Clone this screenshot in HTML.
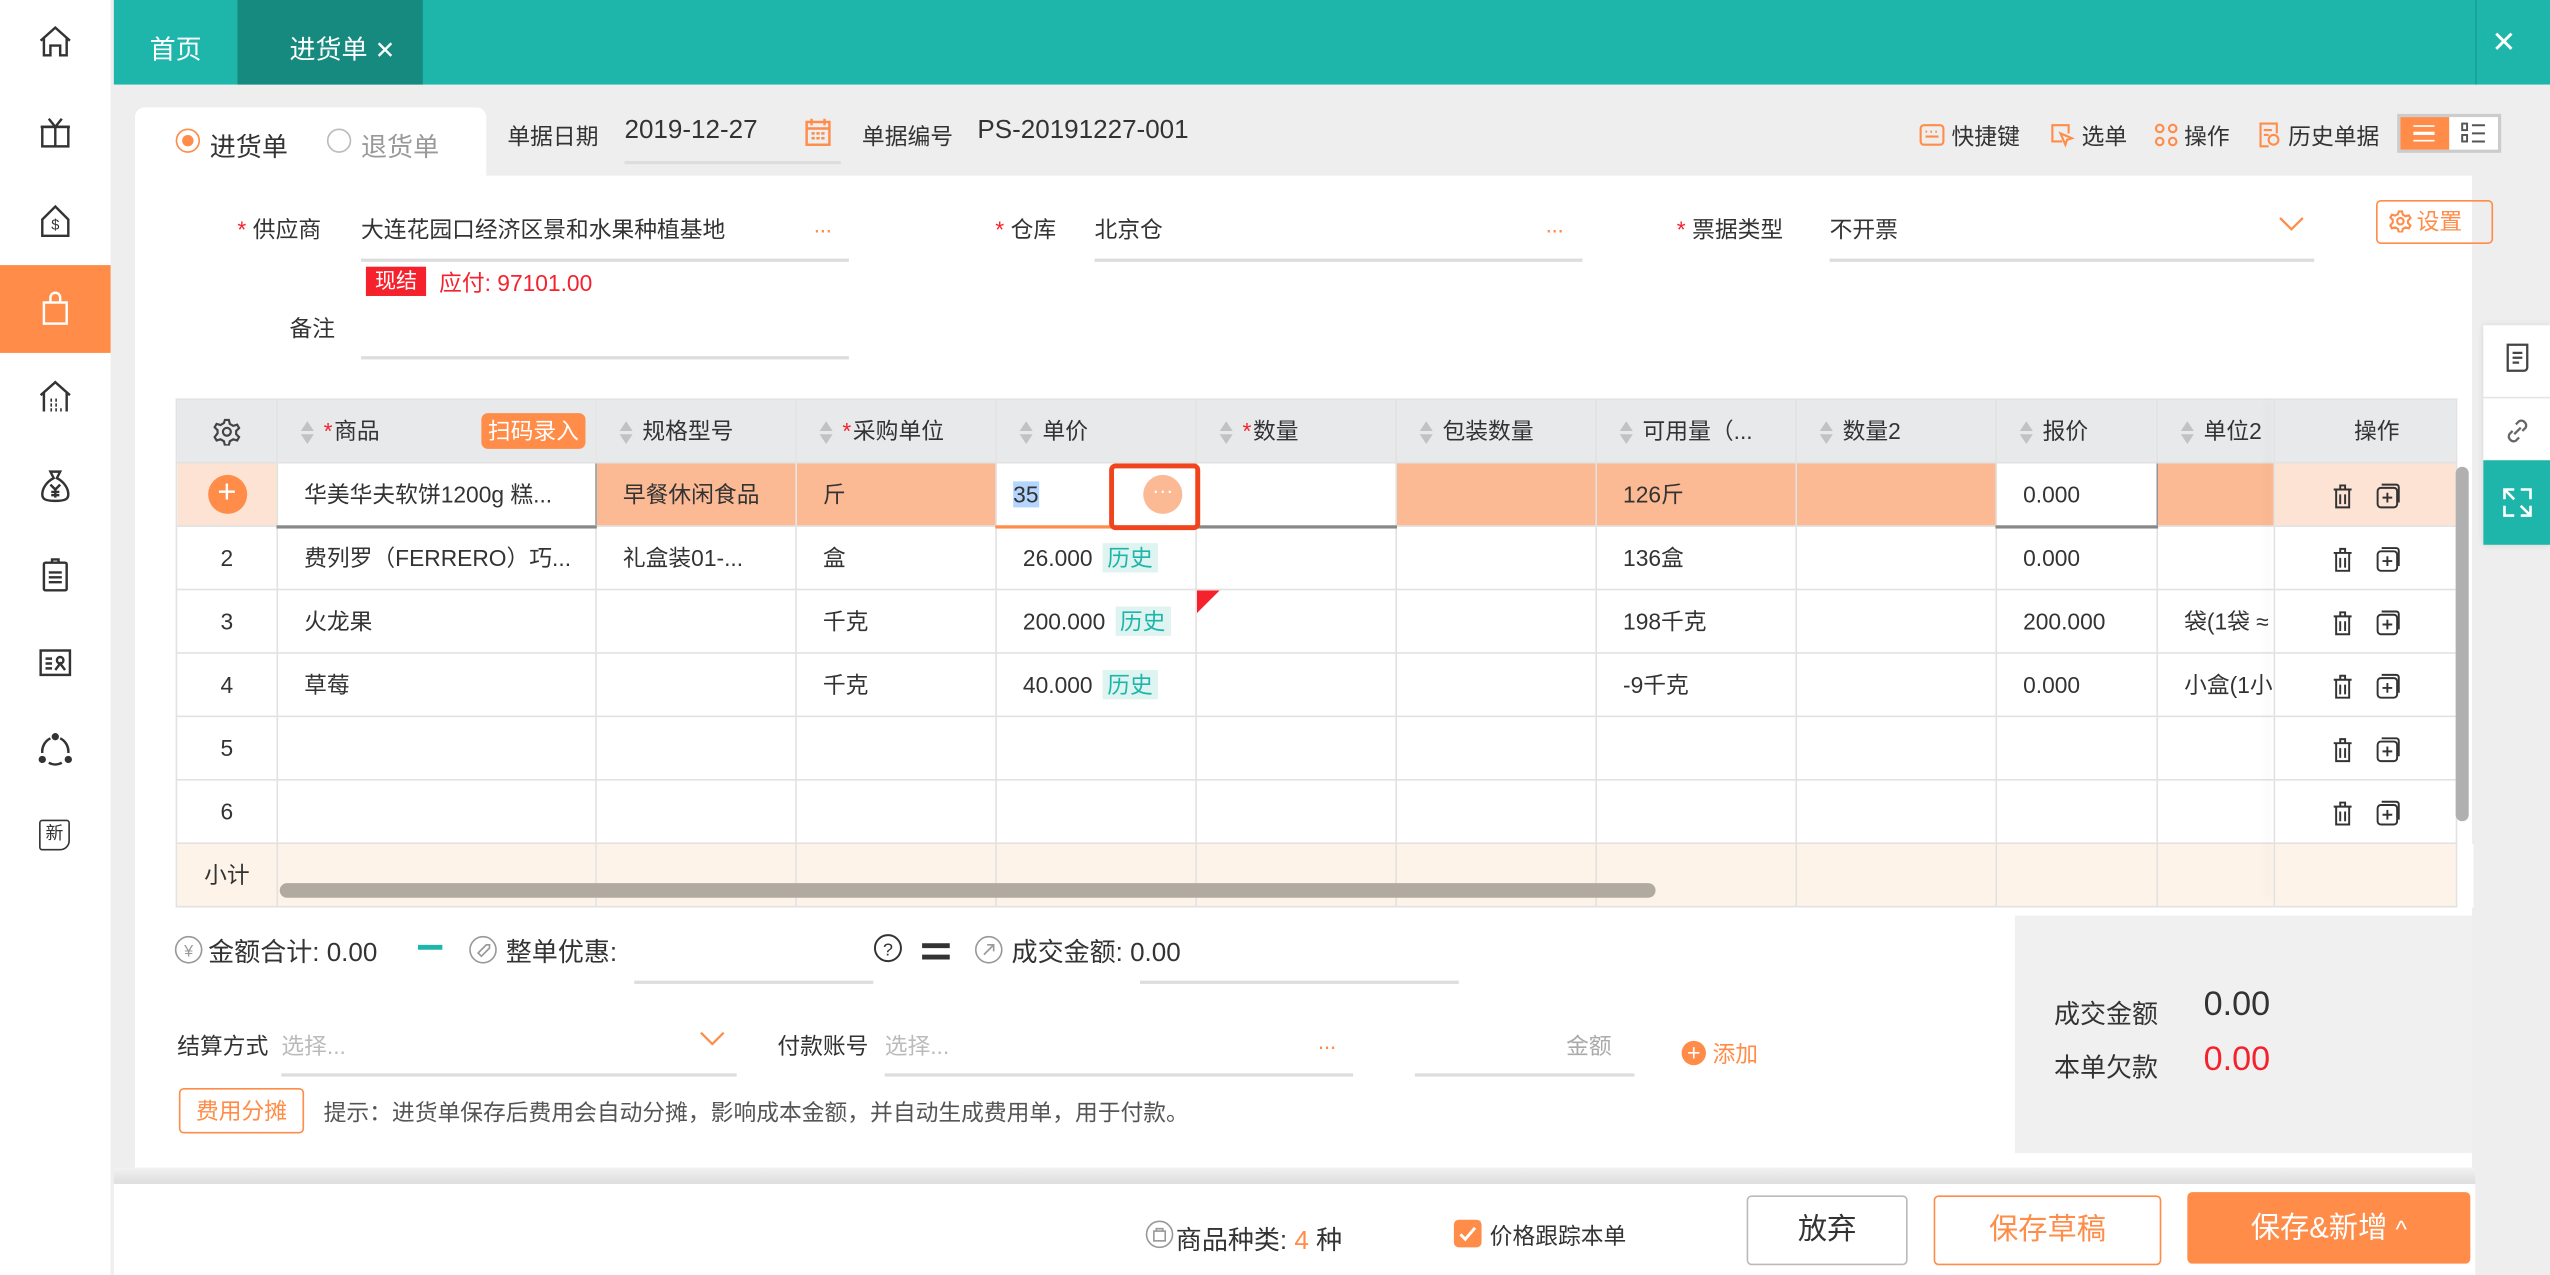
<!DOCTYPE html>
<html><head><meta charset="utf-8"><style>
*{margin:0;padding:0;box-sizing:border-box}
html,body{width:2550px;height:1274px;overflow:hidden;background:#eee}
#w{position:absolute;left:0;top:0;width:1568px;height:784px;transform:scale(1.62628);transform-origin:0 0;font-family:"Liberation Sans","Noto Sans CJK SC",sans-serif;font-size:14px;color:#333;background:#eee}
.a{position:absolute;white-space:nowrap}
.ul{position:absolute;height:1px;background:#ddd}
.st{color:#f5222d;margin-right:4px}
svg{display:block}
table{border-collapse:collapse;table-layout:fixed;position:absolute;left:108px;top:245px;width:1412px}
td{border:1px solid #e2e2e2;height:39px;padding:0 0 0 16px;white-space:nowrap;overflow:hidden;font-size:14px}
tr.h td{background:#e8e9eb;padding-left:14px}
.so{display:inline-block;vertical-align:middle;margin-right:6px;width:8px}
.so i{display:block;width:0;height:0;border-left:4px solid transparent;border-right:4px solid transparent}
.so i.u{border-bottom:6px solid #c2c2c2;margin-bottom:2px}.so i.d{border-top:6px solid #c2c2c2}
.hs{background:#fde3d3}.ho{background:#fbb994}
.ls{color:#1eb6aa;background:#dff4f1;padding:1px 3px;margin-left:6px}
.ops{text-align:center;padding:0}
</style></head><body><div id="w">
<!-- sidebar -->
<div class="a" style="left:0;top:0;width:68px;height:784px;background:#fff"></div>
<div class="a" style="left:0;top:163px;width:68px;height:54px;background:#ff8c48"></div>
<svg class="a" style="left:22px;top:14px" width="24" height="24" viewBox="0 0 24 24" fill="none" stroke="#333" stroke-width="1.5"><path d="M3 11L12 3l9 8M5 9v11h4v-6h6v6h4V9"/></svg>
<svg class="a" style="left:22px;top:69px" width="24" height="24" viewBox="0 0 24 24" fill="none" stroke="#333" stroke-width="1.5"><rect x="4" y="9" width="16" height="12"/><path d="M3 9h18M12 9v12M8 4l4 5 4-5"/></svg>
<svg class="a" style="left:22px;top:124px" width="24" height="24" viewBox="0 0 24 24" fill="none" stroke="#333" stroke-width="1.5"><path d="M12 3l8 8v10H4V11z"/><text x="12" y="17" font-size="9" text-anchor="middle" fill="#333" stroke="none">$</text></svg>
<svg class="a" style="left:22px;top:178px" width="24" height="24" viewBox="0 0 24 24" fill="none" stroke="#fff" stroke-width="1.5"><rect x="5" y="8" width="14" height="13"/><path d="M9 8V5a3 3 0 0 1 6 0v3"/></svg>
<svg class="a" style="left:22px;top:232px" width="24" height="24" viewBox="0 0 24 24" fill="none" stroke="#333" stroke-width="1.5"><path d="M3 11L12 3l9 8M5 9v12M19 9v12"/><path d="M9 14h1M12 14h1M9 17h1M12 17h1M15 20h1M9 20h1M12 20h1" stroke-width="2"/></svg>
<svg class="a" style="left:22px;top:287px" width="24" height="24" viewBox="0 0 24 24" fill="none" stroke="#333" stroke-width="1.5"><path d="M9 3h6l-2 4c4 2 7 6 7 10 0 3-2 4-8 4s-8-1-8-4c0-4 3-8 7-10z"/><path d="M9 11l3 3 3-3M12 14v5M9.5 15.5h5M9.5 17.5h5"/></svg>
<svg class="a" style="left:22px;top:341px" width="24" height="24" viewBox="0 0 24 24" fill="none" stroke="#333" stroke-width="1.5"><rect x="5" y="5" width="14" height="17" rx="1"/><path d="M10 5V3h4v2M8 11h8M8 14h8M8 17h8"/></svg>
<svg class="a" style="left:22px;top:395px" width="24" height="24" viewBox="0 0 24 24" fill="none" stroke="#333" stroke-width="1.5"><rect x="3" y="5" width="18" height="15"/><path d="M6 10h4M6 13h4M6 16h4"/><circle cx="15" cy="11" r="2"/><path d="M12 17l3-4 3 4"/></svg>
<svg class="a" style="left:22px;top:449px" width="24" height="24" viewBox="0 0 24 24" fill="none" stroke="#333" stroke-width="1.5"><circle cx="12" cy="4" r="1.5" fill="#333"/><circle cx="4" cy="18" r="1.5" fill="#333"/><circle cx="20" cy="18" r="1.5" fill="#333"/><path d="M9 5a9 9 0 0 0-5 9M15 5a9 9 0 0 1 5 9M8 20a8 8 0 0 0 8 0"/></svg>
<div class="a" style="left:24px;top:504px;width:19px;height:19px;border:1.5px solid #333;border-radius:2px 2px 6px 2px;font-size:11px;line-height:16px;text-align:center">新</div>
<!-- top bar -->
<div class="a" style="left:70px;top:0;width:1498px;height:52px;background:#1eb6aa"></div>
<div class="a" style="left:146px;top:0;width:114px;height:52px;background:#178a80"></div>
<div class="a" style="left:92px;top:17px;font-size:16px;color:#fff">首页</div>
<div class="a" style="left:178px;top:17px;font-size:16px;color:#fff">进货单 <span style="font-size:15px">✕</span></div>
<div class="a" style="left:1522px;top:0;width:1px;height:52px;background:#17a095"></div>
<div class="a" style="left:1532px;top:16px;font-size:18px;color:#fff">✕</div>
<!-- header tabs -->
<div class="a" style="left:83px;top:66px;width:216px;height:44px;background:#fff;border-radius:6px 6px 0 0"></div>
<div class="a" style="left:108px;top:79px;width:15px;height:15px;border:1.5px solid #ff8c48;border-radius:50%"><div style="margin:2.5px;width:7px;height:7px;background:#ff8c48;border-radius:50%"></div></div>
<div class="a" style="left:129px;top:77px;font-size:16px">进货单</div>
<div class="a" style="left:201px;top:79px;width:15px;height:15px;border:1px solid #bbb;border-radius:50%"></div>
<div class="a" style="left:222px;top:77px;font-size:16px;color:#999">退货单</div>
<div class="a" style="left:312px;top:74px">单据日期</div>
<div class="a" style="left:384px;top:72px;font-size:16px">2019-12-27</div>
<svg class="a" style="left:495px;top:72px" width="16" height="18" viewBox="0 0 16 18" fill="none" stroke="#ff8c48" stroke-width="1.5"><rect x="1" y="3" width="14" height="14"/><path d="M1 7h14M4 1v4M12 1v4M4 10h2M7 10h2M10 10h2M4 13h2M7 13h2M10 13h2"/></svg>
<div class="ul" style="left:384px;top:99px;width:133px;height:2px"></div>
<div class="a" style="left:530px;top:74px">单据编号</div>
<div class="a" style="left:601px;top:72px;font-size:16px">PS-20191227-001</div>
<!-- toolbar -->
<svg class="a" style="left:1180px;top:75px" width="16" height="16" viewBox="0 0 16 16" fill="none" stroke="#ff8c48" stroke-width="1.3"><rect x="1" y="2" width="14" height="12" rx="2"/><path d="M4 6h1M7 6h1M10 6h1M4 9h8"/></svg>
<div class="a" style="left:1200px;top:74px">快捷键</div>
<svg class="a" style="left:1260px;top:75px" width="16" height="16" viewBox="0 0 16 16" fill="none" stroke="#ff8c48" stroke-width="1.3"><path d="M8 12H2V2h10v5"/><path d="M7 7l7 3-3 1-1 3z"/></svg>
<div class="a" style="left:1280px;top:74px">选单</div>
<svg class="a" style="left:1324px;top:75px" width="16" height="16" viewBox="0 0 16 16" fill="none" stroke="#ff8c48" stroke-width="1.3"><circle cx="4" cy="4" r="2.3"/><circle cx="12" cy="4" r="2.3"/><circle cx="4" cy="12" r="2.3"/><circle cx="12" cy="12" r="2.3"/></svg>
<div class="a" style="left:1343px;top:74px">操作</div>
<svg class="a" style="left:1388px;top:75px" width="16" height="16" viewBox="0 0 16 16" fill="none" stroke="#ff8c48" stroke-width="1.3"><path d="M7 15H2V1h10v6M4 5h5M4 8h3"/><circle cx="10" cy="11" r="3"/></svg>
<div class="a" style="left:1407px;top:74px">历史单据</div>
<div class="a" style="left:1474px;top:70px;width:64px;height:24px;border:2px solid #ccc;background:#fff"></div>
<div class="a" style="left:1476px;top:72px;width:30px;height:20px;background:#ff8c48"></div>
<div class="a" style="left:1484px;top:77px;width:13px;height:10px;border-top:1.5px solid #fff;border-bottom:1.5px solid #fff"><div style="margin-top:3px;height:1.5px;background:#fff"></div></div>
<svg class="a" style="left:1513px;top:75px" width="16" height="14" viewBox="0 0 16 14" fill="none" stroke="#555" stroke-width="1.2"><rect x="1" y="1" width="3" height="4"/><rect x="1" y="8" width="3" height="4"/><path d="M7 2h8M7 7h8M7 12h8"/></svg>
<!-- main panel -->
<div class="a" style="left:83px;top:108px;width:1437px;height:610px;background:#fff"></div>
<div class="a" style="left:146px;top:131px"><span class="st">*</span>供应商</div>
<div class="a" style="left:222px;top:131px">大连花园口经济区景和水果种植基地</div>
<div class="a" style="left:500px;top:133px;color:#ff8c48;font-size:14px;letter-spacing:-1px">···</div>
<div class="ul" style="left:222px;top:159px;width:300px;height:2px"></div>
<div class="a" style="left:225px;top:164px;width:37px;height:18px;background:#f5222d;color:#fff;font-size:13px;text-align:center;line-height:18px">现结</div>
<div class="a" style="left:270px;top:164px;color:#f5222d">应付: 97101.00</div>
<div class="a" style="left:178px;top:192px">备注</div>
<div class="ul" style="left:222px;top:219px;width:300px;height:2px"></div>
<div class="a" style="left:612px;top:131px"><span class="st">*</span>仓库</div>
<div class="a" style="left:673px;top:131px">北京仓</div>
<div class="a" style="left:950px;top:133px;color:#ff8c48;letter-spacing:-1px">···</div>
<div class="ul" style="left:673px;top:159px;width:300px;height:2px"></div>
<div class="a" style="left:1031px;top:131px"><span class="st">*</span>票据类型</div>
<div class="a" style="left:1125px;top:131px">不开票</div>
<svg class="a" style="left:1401px;top:133px" width="16" height="10" viewBox="0 0 16 10" fill="none" stroke="#ff8c48" stroke-width="1.4"><path d="M1 1l7 7 7-7"/></svg>
<div class="ul" style="left:1125px;top:159px;width:298px;height:2px"></div>
<div class="a" style="left:1461px;top:123px;width:72px;height:27px;border:1px solid #ff8c48;border-radius:3px;color:#ff8c48;line-height:25px;padding-left:24px">设置</div>
<svg class="a" style="left:1469px;top:129px" width="14" height="14" viewBox="0 0 14 14" fill="none" stroke="#ff8c48" stroke-width="1.3"><circle cx="7" cy="7" r="2"/><path d="M6 1h2l.5 2 1.7 1 2-.6 1 1.7-1.5 1.5v1.6l1.5 1.5-1 1.7-2-.6-1.7 1-.5 2H6l-.5-2-1.7-1-2 .6-1-1.7L2.3 7.8V6.2L.8 4.7l1-1.7 2 .6 1.7-1z"/></svg>
<!-- table -->
<table>
<colgroup><col style="width:62px"><col style="width:196px"><col style="width:123px"><col style="width:123px"><col style="width:123px"><col style="width:123px"><col style="width:123px"><col style="width:123px"><col style="width:123px"><col style="width:99px"><col style="width:72px"><col style="width:112px"><col style="width:10px"></colgroup>
<tr class="h"><td style="padding:0;text-align:center"><svg style="display:inline-block;vertical-align:middle" width="17" height="17" viewBox="0 0 14 14" fill="none" stroke="#444" stroke-width="1.1"><circle cx="7" cy="7" r="2"/><path d="M6 1h2l.5 2 1.7 1 2-.6 1 1.7-1.5 1.5v1.6l1.5 1.5-1 1.7-2-.6-1.7 1-.5 2H6l-.5-2-1.7-1-2 .6-1-1.7L2.3 7.8V6.2L.8 4.7l1-1.7 2 .6 1.7-1z"/></svg></td>
<td><span class="so"><i class="u"></i><i class="d"></i></span><span class="st" style="margin-right:1px">*</span>商品<span style="float:right;margin-right:6px;background:#ff8c48;color:#fff;border-radius:4px;padding:1px 4px;margin-top:-1px">扫码录入</span></td>
<td><span class="so"><i class="u"></i><i class="d"></i></span>规格型号</td>
<td><span class="so"><i class="u"></i><i class="d"></i></span><span class="st" style="margin-right:1px">*</span>采购单位</td>
<td><span class="so"><i class="u"></i><i class="d"></i></span>单价</td>
<td><span class="so"><i class="u"></i><i class="d"></i></span><span class="st" style="margin-right:1px">*</span>数量</td>
<td><span class="so"><i class="u"></i><i class="d"></i></span>包装数量</td>
<td><span class="so"><i class="u"></i><i class="d"></i></span>可用量（...</td>
<td><span class="so"><i class="u"></i><i class="d"></i></span>数量2</td>
<td><span class="so"><i class="u"></i><i class="d"></i></span>报价</td>
<td><span class="so"><i class="u"></i><i class="d"></i></span>单位2</td>
<td class="ops">操作</td><td style="padding:0;background:#fff;border:none"></td></tr>
<tr><td class="hs" style="padding:0;text-align:center"><span style="display:inline-block;width:24px;height:24px;border-radius:50%;background:#ff8c48;color:#fff;font-size:20px;line-height:23px">+</span></td>
<td style="background:#fff;border:1px solid #999;border-bottom:2px solid #888">华美华夫软饼1200g 糕...</td>
<td class="ho">早餐休闲食品</td><td class="ho">斤</td>
<td style="background:#fff;border:1px solid #ff8c48;border-bottom:2px solid #ff8c48;padding-left:10px"><span style="background:#b4d5fe">35</span></td>
<td style="background:#fff;border-bottom:2px solid #888"></td>
<td class="ho"></td><td class="ho">126斤</td><td class="ho"></td>
<td style="background:#fff;border:1px solid #999;border-bottom:2px solid #888">0.000</td>
<td class="ho"></td>
<td class="hs ops">_ICONS_</td><td style="border:none;background:#fff"></td></tr>
<tr><td style="padding:0;text-align:center">2</td><td>费列罗（FERRERO）巧...</td><td>礼盒装01-...</td><td>盒</td><td>26.000<span class="ls">历史</span></td><td></td><td></td><td>136盒</td><td></td><td>0.000</td><td></td><td class="ops">_ICONS_</td><td style="border:none"></td></tr>
<tr><td style="padding:0;text-align:center">3</td><td>火龙果</td><td></td><td>千克</td><td>200.000<span class="ls">历史</span></td><td style="position:relative"><div style="position:absolute;left:0;top:0;width:0;height:0;border-top:14px solid #f5222d;border-right:14px solid transparent"></div></td><td></td><td>198千克</td><td></td><td>200.000</td><td>袋(1袋 ≈</td><td class="ops">_ICONS_</td><td style="border:none"></td></tr>
<tr><td style="padding:0;text-align:center">4</td><td>草莓</td><td></td><td>千克</td><td>40.000<span class="ls">历史</span></td><td></td><td></td><td>-9千克</td><td></td><td>0.000</td><td>小盒(1小</td><td class="ops">_ICONS_</td><td style="border:none"></td></tr>
<tr><td style="padding:0;text-align:center">5</td><td></td><td></td><td></td><td></td><td></td><td></td><td></td><td></td><td></td><td></td><td class="ops">_ICONS_</td><td style="border:none"></td></tr>
<tr><td style="padding:0;text-align:center;height:35px">6</td><td></td><td></td><td></td><td></td><td></td><td></td><td></td><td></td><td></td><td></td><td class="ops">_ICONS_</td><td style="border:none"></td></tr>
<tr style="background:#fdf3e8"><td style="padding:0;text-align:center;height:38px">小计</td><td></td><td></td><td></td><td></td><td></td><td></td><td></td><td></td><td></td><td></td><td></td><td style="border:none;background:#fff"></td></tr>
</table>
<div class="a" style="left:1397px;top:245px;width:1px;height:308px;box-shadow:-3px 0 5px rgba(0,0,0,.08)"></div>
<!-- red box -->
<div class="a" style="left:682px;top:285px;width:56px;height:41px;border:3px solid #f0441f;border-radius:4px"></div>
<div class="a" style="left:703px;top:292px;width:24px;height:24px;border-radius:50%;background:#fbb994;color:#fff;text-align:center;line-height:20px;font-size:13px">···</div>
<!-- scrollbars -->
<div class="a" style="left:172px;top:543px;width:846px;height:9px;border-radius:5px;background:#b1aaa0"></div>
<div class="a" style="left:1510px;top:287px;width:8px;height:218px;border-radius:4px;background:#b0b0b0"></div>
<!-- right float -->
<div class="a" style="left:1527px;top:200px;width:41px;height:135px;background:#fff;box-shadow:0 0 4px rgba(0,0,0,.1)"></div>
<svg class="a" style="left:1538px;top:210px" width="20" height="20" viewBox="0 0 20 20" fill="none" stroke="#444" stroke-width="1.4"><path d="M4 2h12v14a2 2 0 0 1-2 2H4z"/><path d="M7 7h6M7 10h6M7 13h4"/></svg>
<div class="a" style="left:1527px;top:244px;width:41px;height:1px;background:#e5e5e5"></div>
<svg class="a" style="left:1538px;top:255px" width="20" height="20" viewBox="0 0 20 20" fill="none" stroke="#666" stroke-width="1.4"><path d="M8 12l4-4M9 6l2-2a3 3 0 0 1 4 4l-2 2M11 14l-2 2a3 3 0 0 1-4-4l2-2"/></svg>
<div class="a" style="left:1527px;top:283px;width:41px;height:52px;background:#1eb6aa"></div>
<svg class="a" style="left:1538px;top:299px" width="20" height="20" viewBox="0 0 20 20" fill="none" stroke="#fff" stroke-width="1.6"><path d="M2 8V2h6M18 12v6h-6M2 2l6 6M18 18l-6-6M12 2h6v6M8 18H2v-6"/></svg>
<!-- summary -->
<svg class="a" style="left:107px;top:575px" width="18" height="18" viewBox="0 0 18 18" fill="none" stroke="#999" stroke-width="1"><circle cx="9" cy="9" r="8"/><text x="9" y="13" font-size="10" text-anchor="middle" fill="#999" stroke="none">¥</text></svg>
<div class="a" style="left:128px;top:572px;font-size:16px">金额合计: 0.00</div>
<div class="a" style="left:257px;top:581px;width:15px;height:3px;background:#1eb6aa"></div>
<svg class="a" style="left:288px;top:575px" width="18" height="18" viewBox="0 0 18 18" fill="none" stroke="#999" stroke-width="1"><circle cx="9" cy="9" r="8"/><path d="M6 11l5-5h2v2l-5 5z"/></svg>
<div class="a" style="left:311px;top:572px;font-size:16px">整单优惠:</div>
<div class="ul" style="left:390px;top:603px;width:147px;height:2px"></div>
<svg class="a" style="left:537px;top:574px" width="18" height="18" viewBox="0 0 18 18" fill="none" stroke="#333" stroke-width="1.2"><circle cx="9" cy="9" r="8"/><text x="9" y="13.5" font-size="11" text-anchor="middle" fill="#333" stroke="none">?</text></svg>
<div class="a" style="left:567px;top:580px;width:17px;height:3px;background:#333"></div>
<div class="a" style="left:567px;top:587px;width:17px;height:3px;background:#333"></div>
<svg class="a" style="left:599px;top:575px" width="18" height="18" viewBox="0 0 18 18" fill="none" stroke="#999" stroke-width="1"><circle cx="9" cy="9" r="8"/><path d="M6 12l6-6M8 6h4v4"/></svg>
<div class="a" style="left:622px;top:572px;font-size:16px">成交金额: 0.00</div>
<div class="ul" style="left:701px;top:603px;width:196px;height:2px"></div>
<div class="a" style="left:109px;top:633px">结算方式</div>
<div class="a" style="left:173px;top:633px;color:#bbb">选择...</div>
<svg class="a" style="left:430px;top:634px" width="16" height="10" viewBox="0 0 16 10" fill="none" stroke="#ff8c48" stroke-width="1.4"><path d="M1 1l7 7 7-7"/></svg>
<div class="ul" style="left:173px;top:660px;width:280px;height:2px"></div>
<div class="a" style="left:478px;top:633px">付款账号</div>
<div class="a" style="left:544px;top:633px;color:#bbb">选择...</div>
<div class="a" style="left:810px;top:635px;color:#ff8c48;letter-spacing:-1px">···</div>
<div class="ul" style="left:544px;top:660px;width:288px;height:2px"></div>
<div class="a" style="left:963px;top:633px;color:#aaa">金额</div>
<div class="ul" style="left:870px;top:660px;width:135px;height:2px"></div>
<div class="a" style="left:1034px;top:640px;width:15px;height:15px;border-radius:50%;background:#ff8c48;color:#fff;font-size:14px;line-height:14px;text-align:center">+</div>
<div class="a" style="left:1053px;top:638px;color:#ff8c48">添加</div>
<div class="a" style="left:110px;top:669px;width:77px;height:28px;border:1px solid #ff8c48;border-radius:3px;color:#ff8c48;line-height:26px;text-align:center">费用分摊</div>
<div class="a" style="left:199px;top:674px;color:#555">提示：进货单保存后费用会自动分摊，影响成本金额，并自动生成费用单，用于付款。</div>
<div class="a" style="left:1239px;top:563px;width:281px;height:146px;background:#f0f0f0"></div>
<div class="a" style="left:1263px;top:610px;font-size:16px">成交金额</div>
<div class="a" style="left:1355px;top:606px;font-size:21px">0.00</div>
<div class="a" style="left:1263px;top:643px;font-size:16px">本单欠款</div>
<div class="a" style="left:1355px;top:640px;font-size:21px;color:#f5222d">0.00</div>
<!-- bottom bar -->
<div class="a" style="left:70px;top:718px;width:1452px;height:10px;background:linear-gradient(#f2f2f2,#ddd)"></div>
<div class="a" style="left:70px;top:728px;width:1452px;height:56px;background:#fff"></div>
<svg class="a" style="left:704px;top:750px" width="18" height="18" viewBox="0 0 18 18" fill="none" stroke="#999" stroke-width="1"><circle cx="9" cy="9" r="8"/><rect x="5.5" y="7" width="7" height="6"/><path d="M7 7V5.5h4V7"/></svg>
<div class="a" style="left:723px;top:749px;font-size:16px">商品种类: <span style="color:#ff8c48">4</span> 种</div>
<div class="a" style="left:894px;top:750px;width:17px;height:17px;background:#ff8c48;border-radius:3px"></div>
<svg class="a" style="left:897px;top:754px" width="11" height="10" viewBox="0 0 11 10" fill="none" stroke="#fff" stroke-width="1.8"><path d="M1 5l3 3 6-7"/></svg>
<div class="a" style="left:916px;top:750px">价格跟踪本单</div>
<div class="a" style="left:1074px;top:735px;width:99px;height:43px;border:1.5px solid #bbb;border-radius:3px;font-size:18px;text-align:center;line-height:40px">放弃</div>
<div class="a" style="left:1189px;top:735px;width:140px;height:43px;border:1.5px solid #ff8c48;border-radius:3px;font-size:18px;text-align:center;line-height:40px;color:#ff8c48">保存草稿</div>
<div class="a" style="left:1345px;top:733px;width:174px;height:44px;background:#ff8c48;border-radius:3px;font-size:18px;text-align:center;line-height:44px;color:#fff">保存&amp;新增 <span style="font-size:15px">^</span></div>
</div>
<script>
var ic='<svg style="display:inline-block;vertical-align:middle;margin-right:14px" width="13" height="16" viewBox="0 0 13 16" fill="none" stroke="#333" stroke-width="1.2"><path d="M1 4h11M5 4V1.5h3V4M2.5 4v11h8V4M5 7v6M8 7v6"/></svg><svg style="display:inline-block;vertical-align:middle" width="15" height="16" viewBox="0 0 15 16" fill="none" stroke="#333" stroke-width="1.2"><rect x="1" y="3" width="12" height="12" rx="2"/><path d="M3.5 1h9a1.5 1.5 0 0 1 1.5 1.5V12M7 6v6M4 9h6"/></svg>';
document.querySelectorAll('td.ops').forEach(function(t){if(t.innerHTML=='_ICONS_')t.innerHTML=ic;});
</script>
</body></html>
